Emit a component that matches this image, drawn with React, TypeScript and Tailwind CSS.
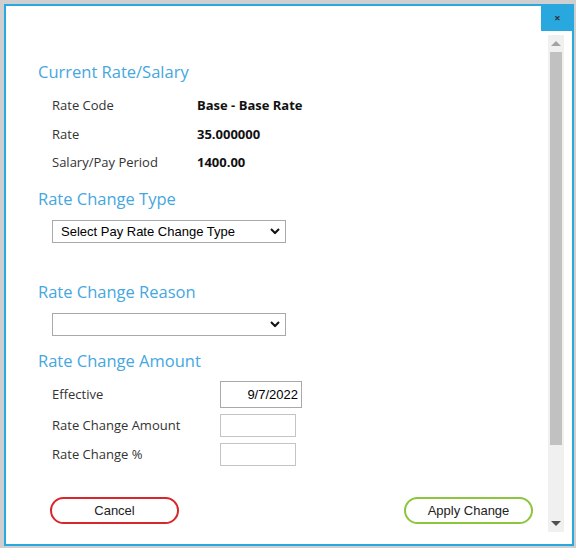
import React, { useState } from 'react'

const current = [
  { label: 'Rate Code', value: 'Base - Base Rate' },
  { label: 'Rate', value: '35.000000' },
  { label: 'Salary/Pay Period', value: '1400.00' },
]

const Heading = ({ children, className = '' }: { children: React.ReactNode; className?: string }) => (
  <h3 className={`text-[16.5px] leading-[22px] text-[#45a7e0] font-['Open_Sans',sans-serif] ${className}`}>{children}</h3>
)

const Chevron = () => (
  <svg className="pointer-events-none absolute right-[6px] top-1/2 -translate-y-1/2" width="10" height="7" viewBox="0 0 10 7">
    <path d="M1 1.5 L5 5.5 L9 1.5" fill="none" stroke="#111" strokeWidth="2" />
  </svg>
)

const RateChangeModal = () => {
  const [form, setForm] = useState({ type: '', reason: '', effective: '9/7/2022', amount: '', percent: '' })

  return (
    <div className="min-h-[548px] w-[576px] bg-[#cfcfcf] pt-1 pl-1">
      <div className="relative flex h-[542px] w-[570px] border-2 border-[#29a8e0] bg-white">
        <button className="absolute -right-[2px] -top-[2px] flex h-[27px] w-[33px] items-center justify-center bg-[#29a8e0] text-[11px] font-bold leading-none text-[#333]">
          ×
        </button>

        <div className="flex-1 pl-[32px] pr-[15px] pt-[55px] font-['Open_Sans',sans-serif] text-[13px] text-[#333]">
          <Heading>Current Rate/Salary</Heading>
          <div className="mt-[8px] pl-[14px]">
            {current.map((row) => (
              <div key={row.label} className="flex h-[28.5px] items-center pt-[1px]">
                <span className="w-[145px]">{row.label}</span>
                <span className="font-bold text-[#111]">{row.value}</span>
              </div>
            ))}
          </div>

          <Heading className="mt-[11px]">Rate Change Type</Heading>
          <div className="relative ml-[14px] mt-[10px] w-[234px]">
            <select
              value={form.type}
              onChange={(e) => setForm({ ...form, type: e.target.value })}
              className="block h-[23px] w-full appearance-none border border-[#a9a9a9] bg-white pl-[8px] pt-[1px] font-['Liberation_Sans',Arial,sans-serif] text-[13px] text-black outline-none"
            >
              <option value="">Select Pay Rate Change Type</option>
            </select>
            <Chevron />
          </div>

          <Heading className="mt-[38px]">Rate Change Reason</Heading>
          <div className="relative ml-[14px] mt-[10px] w-[234px]">
            <select
              value={form.reason}
              onChange={(e) => setForm({ ...form, reason: e.target.value })}
              className="block h-[23px] w-full appearance-none border border-[#a9a9a9] bg-white pl-[8px] font-['Liberation_Sans',Arial,sans-serif] text-[13px] text-black outline-none"
            >
              <option value=""></option>
            </select>
            <Chevron />
          </div>

          <Heading className="mt-[14px]">Rate Change Amount</Heading>
          <div className="mt-[9px] flex flex-col gap-[6px] pl-[14px]">
            <div className="flex items-center">
              <span className="w-[168px] pt-[1px]">Effective</span>
              <input
                value={form.effective}
                onChange={(e) => setForm({ ...form, effective: e.target.value })}
                className="h-[27px] w-[82px] border border-[#a9a9a9] px-[3px] pt-[1px] text-right font-['Liberation_Sans',Arial,sans-serif] text-[13px] text-black outline-none"
              />
            </div>
            <div className="flex items-center">
              <span className="w-[168px] pt-[1px]">Rate Change Amount</span>
              <input
                value={form.amount}
                onChange={(e) => setForm({ ...form, amount: e.target.value })}
                className="h-[23px] w-[76px] border border-[#c4c4c4] px-[3px] text-[13px] outline-none"
              />
            </div>
            <div className="flex items-center">
              <span className="w-[168px] pt-[1px]">Rate Change %</span>
              <input
                value={form.percent}
                onChange={(e) => setForm({ ...form, percent: e.target.value })}
                className="h-[23px] w-[76px] border border-[#c4c4c4] px-[3px] text-[13px] outline-none"
              />
            </div>
          </div>

          <div className="mt-[31px] flex justify-between pl-[12px] font-['Liberation_Sans',Arial,sans-serif] text-[13px] text-[#222]">
            <button className="h-[27px] w-[129px] rounded-full border-2 border-[#d9262b] bg-white pt-[2px]">Cancel</button>
            <button className="h-[27px] w-[129px] rounded-full border-2 border-[#8cc63f] bg-white pt-[2px]">Apply Change</button>
          </div>
        </div>

        {/* fake scrollbar */}
        <div className="mb-[12px] mr-[8px] mt-[29px] flex w-[16px] flex-col items-center bg-[#f0f0f0]">
          <div className="flex h-[17px] items-center justify-center">
            <div className="h-0 w-0 border-x-[5px] border-b-[5px] border-x-transparent border-b-[#a3a3a3]" />
          </div>
          <div className="h-[393px] w-[12px] bg-[#c1c1c1]" />
          <div className="flex-1" />
          <div className="flex h-[17px] items-center justify-center">
            <div className="h-0 w-0 border-x-[5px] border-t-[5px] border-x-transparent border-t-[#505050]" />
          </div>
        </div>
      </div>
    </div>
  )
}

export default function App() {
  return <RateChangeModal />
}
